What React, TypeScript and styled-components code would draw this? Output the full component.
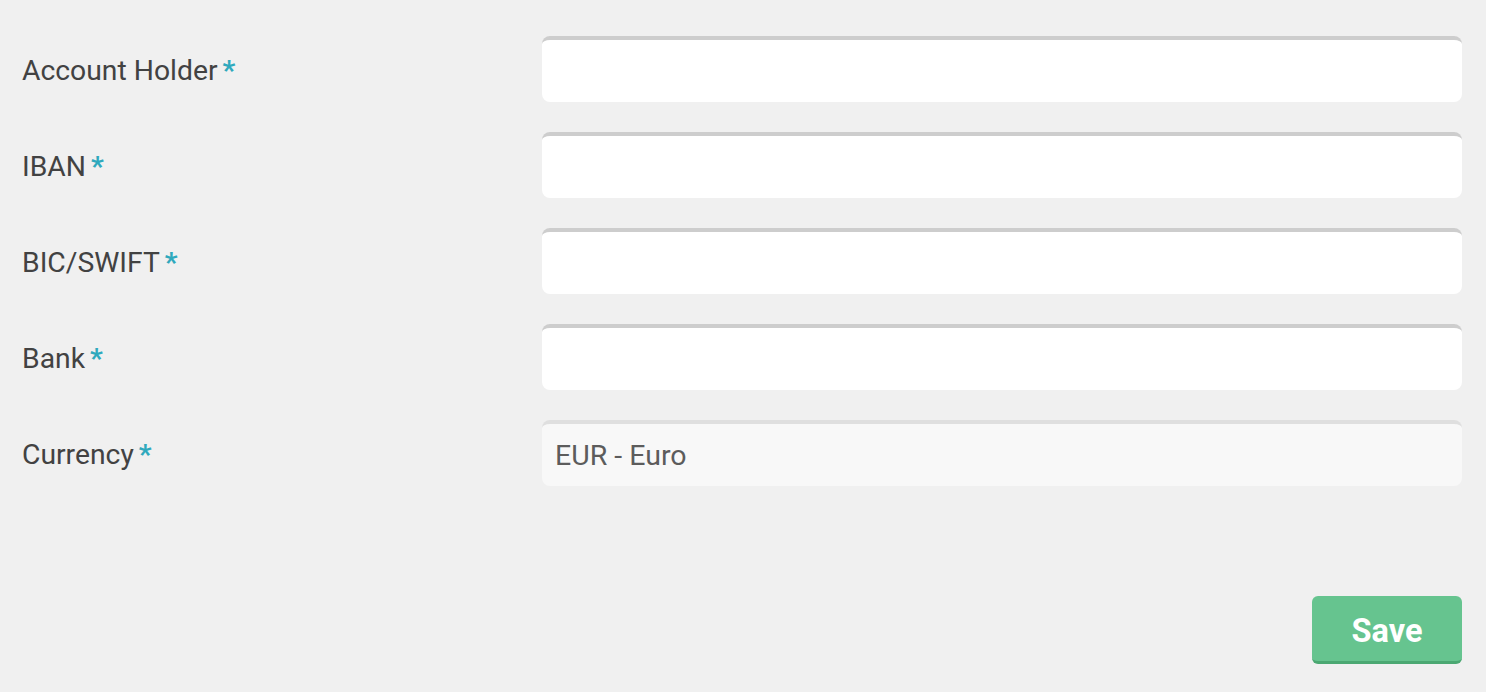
import React from "react";
import styled, { createGlobalStyle } from "styled-components";

const Global = createGlobalStyle`
  html, body { margin: 0; padding: 0; background: #f0f0f0; }
  body { font-family: Roboto, "Liberation Sans", sans-serif; }
`;

const Page = styled.div`
  padding: 36px 24px 28px 22px;
  box-sizing: border-box;
  width: 1486px;
  min-height: 692px;
`;

const Form = styled.form`
  display: flex;
  flex-direction: column;
  gap: 30px;
`;

const Row = styled.div`
  display: grid;
  grid-template-columns: 520px 1fr;
  align-items: center;
`;

const Label = styled.label`
  font-size: 28.3px;
  color: #424242;
  padding-top: 2px;
`;

const Star = styled.span`
  color: #2fa9bd;
  font-weight: 700;
  margin-left: 5px;
`;

const Input = styled.div<{ $disabled?: boolean }>`
  height: 66px;
  box-sizing: border-box;
  border-radius: 8px;
  border-top: 4px solid ${(p) => (p.$disabled ? "#dfdfdf" : "#cdcdcd")};
  background: ${(p) => (p.$disabled ? "#f8f8f8" : "#ffffff")};
  display: flex;
  align-items: center;
  padding: 1px 13px 0;
  font-size: 28.5px;
  color: #5c5c5c;
`;

const Footer = styled.div`
  display: flex;
  justify-content: flex-end;
  margin-top: 110px;
`;

const SaveButton = styled.button`
  width: 150px;
  height: 68px;
  border: none;
  border-radius: 6px;
  background: #66c48f;
  border-bottom: 3px solid #4ba872;
  color: #ffffff;
  font-family: Roboto, "Liberation Sans", sans-serif;
  font-weight: 700;
  font-size: 32.5px;
  padding: 5px 0 0;
  cursor: pointer;
`;

const fields: { label: string; value?: string; disabled?: boolean }[] = [
  { label: "Account Holder" },
  { label: "IBAN" },
  { label: "BIC/SWIFT" },
  { label: "Bank" },
  { label: "Currency", value: "EUR - Euro", disabled: true },
];

export default function App() {
  return (
    <>
      <Global />
      <Page>
        <Form onSubmit={(e) => e.preventDefault()}>
          {fields.map((f) => (
            <Row key={f.label}>
              <Label>
                {f.label}
                <Star>*</Star>
              </Label>
              <Input $disabled={f.disabled}>{f.value}</Input>
            </Row>
          ))}
        </Form>
        <Footer>
          <SaveButton type="button">Save</SaveButton>
        </Footer>
      </Page>
    </>
  );
}
